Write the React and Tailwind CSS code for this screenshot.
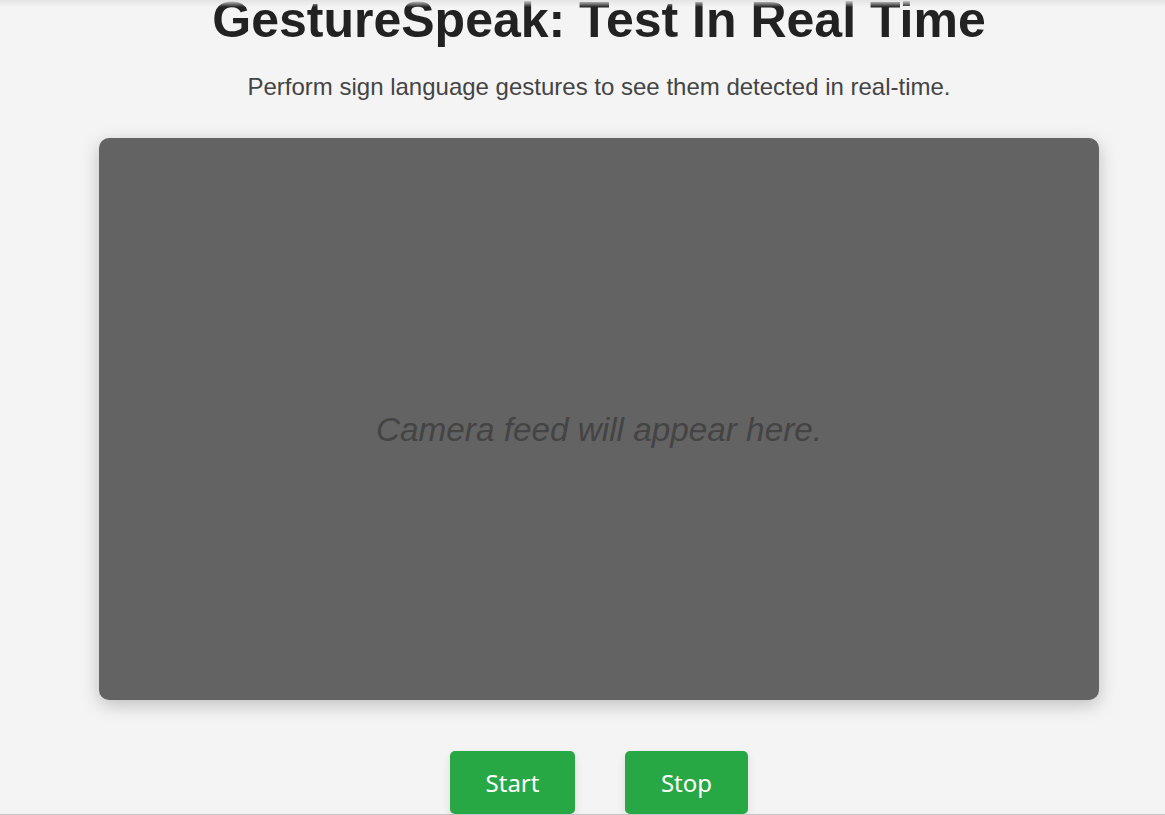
import React from "react";

const App = () => {
  return (
    <div className="relative h-[815px] w-full overflow-hidden bg-[#f4f4f4] border-b border-[#c4c4c4]">
      <div className="pointer-events-none absolute inset-x-0 top-0 h-[7px] bg-gradient-to-b from-[#e4e4e4] to-transparent" />
      <main className="flex flex-col items-center -mt-[9px] pl-[33px] font-['Liberation_Sans',Arial,sans-serif]">
        <h1 className="whitespace-nowrap text-[50px] leading-[58px] font-bold text-[#222]">
          GestureSpeak: Test In Real Time
        </h1>
        <p className="mt-[24px] text-[24px] leading-[28px] text-[#444]">
          Perform sign language gestures to see them detected in real-time.
        </p>

        <div className="mt-[37px] flex h-[562px] w-[1000px] items-center justify-center rounded-[10px] bg-[#636363] pt-[22px] shadow-[0_5px_18px_rgba(0,0,0,0.22)]">
          <p className="text-[33.3px] italic text-[#444]">
            Camera feed will appear here.
          </p>
        </div>

        <div className="mt-[51px] flex gap-[50px] font-['Noto_Sans',sans-serif]">
          <button className="h-[63px] w-[125px] rounded-[5px] bg-[#28a745] text-[24px] text-white shadow-[0_4px_10px_rgba(0,0,0,0.1)] hover:bg-[#218838]">
            Start
          </button>
          <button className="h-[63px] w-[123px] rounded-[5px] bg-[#28a745] text-[24px] text-white shadow-[0_4px_10px_rgba(0,0,0,0.1)] hover:bg-[#218838]">
            Stop
          </button>
        </div>
      </main>
    </div>
  );
};

export default App;
